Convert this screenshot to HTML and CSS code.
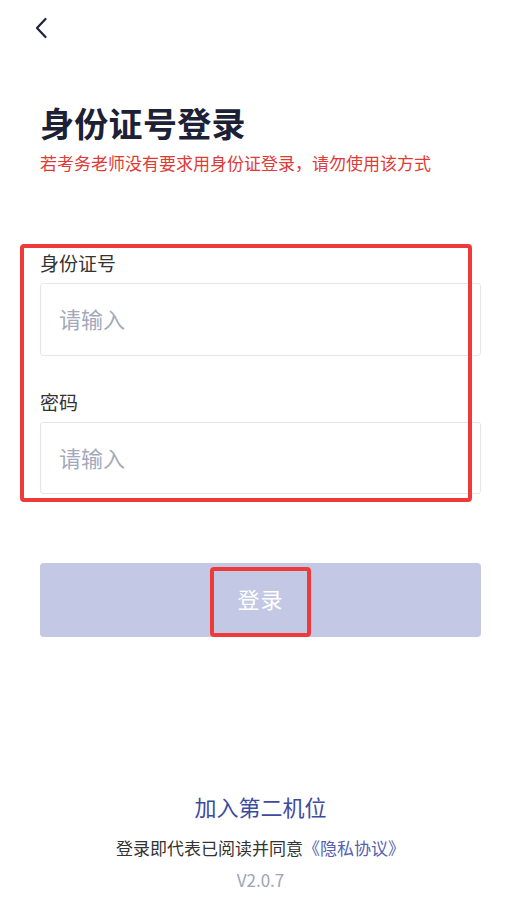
FILE: index.html
```html
<!DOCTYPE html>
<html lang="zh-CN">
<head>
    <meta charset="UTF-8">
    <meta name="viewport" content="width=device-width, initial-scale=1.0">
    <title>身份证号登录</title>
    <link rel="stylesheet" href="styles.css">
</head>
<body>

    <div class="page">
        <!-- Top bar -->
        <div class="topbar">
            <svg class="back" width="14" height="22" viewBox="0 0 14 22">
                <path d="M11.5 2 L3 11 L11.5 20" fill="none" stroke="#1c2136" stroke-width="2.2" stroke-linecap="round" stroke-linejoin="round"/>
            </svg>
        </div>

        <h1 class="title">身份证号登录</h1>
        <p class="tip">若考务老师没有要求用身份证登录，请勿使用该方式</p>

        <!-- Form -->
        <div class="form">
            <label class="label" for="idno">身份证号</label>
            <input class="field" id="idno" type="text" placeholder="请输入">

            <label class="label label-second" for="pwd">密码</label>
            <input class="field" id="pwd" type="password" placeholder="请输入">

            <div class="mark mark-form"></div>
        </div>

        <div class="btn-wrap">
            <button class="btn">登录</button>
            <div class="mark mark-btn"></div>
        </div>

        <!-- Footer -->
        <div class="footer">
            <a class="second" href="#">加入第二机位</a>
            <p class="agree">登录即代表已阅读并同意<a href="#">《隐私协议》</a></p>
            <p class="version">V2.0.7</p>
        </div>
    </div>

</body>
</html>
```

FILE: styles.css
```css
/* Global Styles */
* {
    margin: 0;
    padding: 0;
    box-sizing: border-box;
    font-family: "Noto Sans CJK SC", "Noto Sans", sans-serif;
}

body {
    background: #fff;
    width: 516px;
}

.page {
    display: flex;
    flex-direction: column;
    height: 900px;
    padding: 0 35px 0 40px;
    position: relative;
}

/* Top bar */
.topbar {
    height: 99px;
    padding-top: 17px;
}

.back {
    display: block;
    margin-left: -6px;
}

.title {
    font-size: 34px;
    line-height: 48px;
    font-weight: 700;
    color: #1c2136;
    letter-spacing: 0.3px;
}

.tip {
    margin-top: 4px;
    font-size: 17px;
    line-height: 24px;
    color: #e03a36;
}

/* Form */
.form {
    position: relative;
    margin-top: 75px;
    display: flex;
    flex-direction: column;
}

.label {
    font-size: 19px;
    line-height: 26px;
    color: #333;
}

.label-second {
    margin-top: 33px;
}

.field {
    margin-top: 7px;
    width: 441px;
    height: 73px;
    border: 1px solid #e4e6eb;
    border-radius: 3px;
    padding: 0 18px 3px;
    font-size: 22px;
    color: #333;
    outline: none;
    background: #fff;
}

.field::placeholder {
    color: #a3a9bb;
}

.field + .label + .field {
    height: 72px;
}

/* Button */
.btn-wrap {
    position: relative;
    margin-top: 69px;
}

.btn {
    display: block;
    width: 441px;
    height: 74px;
    padding-bottom: 4px;
    border: none;
    border-radius: 4px;
    background: #c3c8e4;
    color: #fff;
    font-size: 22px;
    letter-spacing: 1px;
}

/* Red annotation boxes */
.mark {
    position: absolute;
    border: 4px solid #ee3a3a;
    border-radius: 4px;
    pointer-events: none;
}

.mark-form {
    left: -20px;
    top: -6px;
    width: 452px;
    height: 258px;
}

.mark-btn {
    left: 170px;
    top: 4px;
    width: 101px;
    height: 70px;
}

/* Footer */
.footer {
    margin-top: auto;
    padding-bottom: 9px;
    text-align: center;
}

.second {
    display: block;
    font-size: 22px;
    line-height: 30px;
    color: #3e4a9e;
    text-decoration: none;
}

.agree {
    margin-top: 15px;
    font-size: 17px;
    line-height: 24px;
    color: #333;
}

.agree a {
    color: #5560b4;
    text-decoration: none;
}

.version {
    margin-top: 9px;
    font-size: 17px;
    line-height: 22px;
    color: #9ea4b5;
}
```
